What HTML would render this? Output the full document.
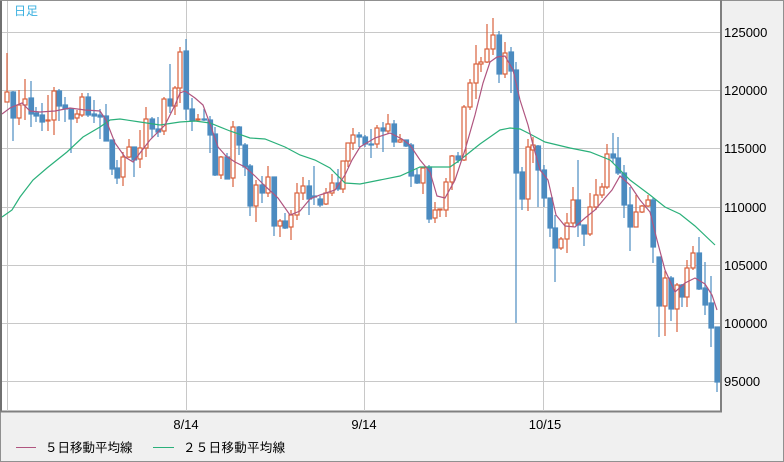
<!DOCTYPE html>
<html><head><meta charset="utf-8"><style>
html,body{margin:0;padding:0;background:#f0f0f0;}
svg{display:block;font-family:"Liberation Sans","Noto Sans CJK JP",sans-serif;}
</style></head><body>
<svg width="784" height="462" viewBox="0 0 784 462" xmlns="http://www.w3.org/2000/svg">
<rect x="0" y="0" width="784" height="462" fill="#f0f0f0"/>
<rect x="0.5" y="0.5" width="783" height="461" fill="none" stroke="#909090"/>
<rect x="2" y="1" width="718" height="410" fill="#fff"/>
<line x1="1" y1="0" x2="1" y2="412" stroke="#707070" stroke-width="2"/>
<line x1="0" y1="0.5" x2="784" y2="0.5" stroke="#909090"/>
<line x1="721" y1="0" x2="721" y2="412" stroke="#808080" stroke-width="2"/>
<line x1="0" y1="411.5" x2="722" y2="411.5" stroke="#808080" stroke-width="2"/>
<g stroke="#c8c8c8" stroke-width="1">
<line x1="2" y1="32.5" x2="720" y2="32.5"/><line x1="2" y1="90.5" x2="720" y2="90.5"/><line x1="2" y1="148.5" x2="720" y2="148.5"/><line x1="2" y1="207.5" x2="720" y2="207.5"/><line x1="2" y1="265.5" x2="720" y2="265.5"/><line x1="2" y1="323.5" x2="720" y2="323.5"/><line x1="2" y1="381.5" x2="720" y2="381.5"/>
<line x1="7.5" y1="1" x2="7.5" y2="411"/><line x1="186.5" y1="1" x2="186.5" y2="411"/><line x1="364.5" y1="1" x2="364.5" y2="411"/><line x1="543.5" y1="1" x2="543.5" y2="411"/>
</g>
<text x="14" y="15" font-size="12" fill="#3ab0e0">日足</text>
<g font-size="13" fill="#000">
<text x="724" y="37">125000</text><text x="724" y="95">120000</text><text x="724" y="153">115000</text><text x="724" y="212">110000</text><text x="724" y="270">105000</text><text x="724" y="328">100000</text><text x="724" y="386">95000</text>
<text x="186" y="429" text-anchor="middle">8/14</text><text x="364" y="429" text-anchor="middle">9/14</text><text x="545" y="429" text-anchor="middle">10/15</text>
</g>
<line x1="16" y1="447.5" x2="36" y2="447.5" stroke="#b0557f"/>
<text x="45" y="452" font-size="12.5" letter-spacing="0">５日移動平均線</text>
<line x1="153" y1="447.5" x2="174" y2="447.5" stroke="#2ab07a"/>
<text x="183" y="452" font-size="12.5" letter-spacing="0.3">２５日移動平均線</text>

<g stroke="#4b8bc0" fill="#4b8bc0" stroke-width="1.2">
<line x1="13" y1="91" x2="13" y2="141"/><rect x="11" y="92" width="4.5" height="26"/>
<line x1="31" y1="81" x2="31" y2="127"/><rect x="29" y="98" width="4.5" height="16"/>
<line x1="36" y1="107" x2="36" y2="122"/><rect x="34" y="113" width="4.5" height="3"/>
<line x1="42" y1="103" x2="42" y2="131"/><rect x="40" y="115" width="4.5" height="7"/>
<line x1="59" y1="89" x2="59" y2="121"/><rect x="57" y="91" width="4.5" height="15"/>
<line x1="65" y1="97" x2="65" y2="122"/><rect x="63" y="105" width="4.5" height="4"/>
<line x1="71" y1="108" x2="71" y2="153"/><rect x="69" y="109" width="4.5" height="10"/>
<line x1="88" y1="93" x2="88" y2="117"/><rect x="86" y="97" width="4.5" height="18"/>
<line x1="94" y1="100" x2="94" y2="123"/><rect x="92" y="114" width="4.5" height="2"/>
<line x1="100" y1="109" x2="100" y2="139"/><rect x="98" y="115" width="4.5" height="2"/>
<line x1="106" y1="104" x2="106" y2="141"/><rect x="104" y="116" width="4.5" height="25"/>
<line x1="112" y1="140" x2="112" y2="175"/><rect x="110" y="140" width="4.5" height="29"/>
<line x1="117" y1="160" x2="117" y2="184"/><rect x="115" y="168" width="4.5" height="10"/>
<line x1="134" y1="147" x2="134" y2="177"/><rect x="132" y="147" width="4.5" height="13"/>
<line x1="152" y1="117" x2="152" y2="138"/><rect x="150" y="119" width="4.5" height="10"/>
<line x1="158" y1="117" x2="158" y2="137"/><rect x="156" y="129" width="4.5" height="3"/>
<line x1="170" y1="64" x2="170" y2="113"/><rect x="168" y="99" width="4.5" height="7"/>
<line x1="186" y1="39" x2="186" y2="120"/><rect x="184" y="51" width="4.5" height="58"/>
<line x1="192" y1="98" x2="192" y2="131"/><rect x="190" y="109" width="4.5" height="12"/>
<line x1="204" y1="109" x2="204" y2="121"/><rect x="202" y="119" width="4.5" height="1"/>
<line x1="210" y1="116" x2="210" y2="153"/><rect x="208" y="120" width="4.5" height="15"/>
<line x1="215" y1="127" x2="215" y2="176"/><rect x="213" y="134" width="4.5" height="41"/>
<line x1="227" y1="153" x2="227" y2="179"/><rect x="225" y="157" width="4.5" height="22"/>
<line x1="239" y1="126" x2="239" y2="155"/><rect x="237" y="127" width="4.5" height="18"/>
<line x1="245" y1="143" x2="245" y2="176"/><rect x="243" y="145" width="4.5" height="22"/>
<line x1="250" y1="164" x2="250" y2="216"/><rect x="248" y="166" width="4.5" height="40"/>
<line x1="262" y1="176" x2="262" y2="203"/><rect x="260" y="185" width="4.5" height="8"/>
<line x1="274" y1="177" x2="274" y2="236"/><rect x="272" y="177" width="4.5" height="49"/>
<line x1="285" y1="213" x2="285" y2="229"/><rect x="283" y="221" width="4.5" height="7"/>
<line x1="309" y1="180" x2="309" y2="215"/><rect x="307" y="186" width="4.5" height="13"/>
<line x1="314" y1="166" x2="314" y2="205"/><rect x="312" y="196" width="4.5" height="1"/>
<line x1="320" y1="196" x2="320" y2="207"/><rect x="318" y="199" width="4.5" height="6"/>
<line x1="338" y1="169" x2="338" y2="191"/><rect x="336" y="183" width="4.5" height="6"/>
<line x1="359" y1="132" x2="359" y2="147"/><rect x="357" y="135" width="4.5" height="2"/>
<line x1="365" y1="135" x2="365" y2="147"/><rect x="363" y="137" width="4.5" height="7"/>
<line x1="371" y1="129" x2="371" y2="158"/><rect x="369" y="144" width="4.5" height="1"/>
<line x1="383" y1="122" x2="383" y2="152"/><rect x="381" y="128" width="4.5" height="3"/>
<line x1="394" y1="120" x2="394" y2="147"/><rect x="392" y="124" width="4.5" height="18"/>
<line x1="406" y1="140" x2="406" y2="147"/><rect x="404" y="140" width="4.5" height="6"/>
<line x1="411" y1="143" x2="411" y2="187"/><rect x="409" y="145" width="4.5" height="31"/>
<line x1="417" y1="169" x2="417" y2="184"/><rect x="415" y="175" width="4.5" height="8"/>
<line x1="429" y1="165" x2="429" y2="223"/><rect x="427" y="167" width="4.5" height="52"/>
<line x1="458" y1="152" x2="458" y2="163"/><rect x="456" y="156" width="4.5" height="4"/>
<line x1="499" y1="31" x2="499" y2="83"/><rect x="497" y="35" width="4.5" height="39"/>
<line x1="511" y1="47" x2="511" y2="93"/><rect x="509" y="52" width="4.5" height="19"/>
<line x1="516" y1="62" x2="516" y2="323"/><rect x="514" y="70" width="4.5" height="103"/>
<line x1="522" y1="167" x2="522" y2="210"/><rect x="520" y="172" width="4.5" height="27"/>
<line x1="538" y1="145" x2="538" y2="207"/><rect x="536" y="146" width="4.5" height="24"/>
<line x1="544" y1="165" x2="544" y2="207"/><rect x="542" y="170" width="4.5" height="28"/>
<line x1="550" y1="198" x2="550" y2="237"/><rect x="548" y="198" width="4.5" height="30"/>
<line x1="555" y1="215" x2="555" y2="282"/><rect x="553" y="228" width="4.5" height="20"/>
<line x1="578" y1="160" x2="578" y2="237"/><rect x="576" y="200" width="4.5" height="25"/>
<line x1="584" y1="225" x2="584" y2="246"/><rect x="582" y="225" width="4.5" height="9"/>
<line x1="613" y1="133" x2="613" y2="163"/><rect x="611" y="154" width="4.5" height="4"/>
<line x1="618" y1="137" x2="618" y2="175"/><rect x="616" y="158" width="4.5" height="15"/>
<line x1="624" y1="165" x2="624" y2="218"/><rect x="622" y="173" width="4.5" height="32"/>
<line x1="630" y1="187" x2="630" y2="251"/><rect x="628" y="205" width="4.5" height="22"/>
<line x1="653" y1="198" x2="653" y2="263"/><rect x="651" y="200" width="4.5" height="47"/>
<line x1="659" y1="257" x2="659" y2="337"/><rect x="657" y="257" width="4.5" height="49"/>
<line x1="671" y1="276" x2="671" y2="321"/><rect x="669" y="278" width="4.5" height="31"/>
<line x1="682" y1="284" x2="682" y2="307"/><rect x="680" y="285" width="4.5" height="12"/>
<line x1="699" y1="237" x2="699" y2="290"/><rect x="697" y="253" width="4.5" height="36"/>
<line x1="705" y1="262" x2="705" y2="315"/><rect x="703" y="288" width="4.5" height="17"/>
<line x1="711" y1="276" x2="711" y2="347"/><rect x="709" y="303" width="4.5" height="25"/>
<line x1="717" y1="327" x2="717" y2="392"/><rect x="715" y="327" width="4.5" height="55"/>
</g>
<g stroke="#d9613c" fill="#fff" stroke-width="1.2">
<line x1="7" y1="53" x2="7" y2="102"/><rect x="5" y="92" width="4" height="10"/>
<line x1="19" y1="90" x2="19" y2="125"/><rect x="17" y="105" width="4" height="13"/>
<line x1="25" y1="79" x2="25" y2="120"/><rect x="23" y="99" width="4" height="6"/>
<line x1="48" y1="95" x2="48" y2="131"/><rect x="46" y="120" width="4" height="1"/>
<line x1="54" y1="87" x2="54" y2="135"/><rect x="52" y="91" width="4" height="29"/>
<line x1="77" y1="110" x2="77" y2="123"/><rect x="75" y="114" width="4" height="4"/>
<line x1="82" y1="93" x2="82" y2="117"/><rect x="80" y="97" width="4" height="18"/>
<line x1="123" y1="152" x2="123" y2="186"/><rect x="121" y="157" width="4" height="20"/>
<line x1="129" y1="139" x2="129" y2="158"/><rect x="127" y="147" width="4" height="10"/>
<line x1="140" y1="130" x2="140" y2="168"/><rect x="138" y="148" width="4" height="11"/>
<line x1="146" y1="107" x2="146" y2="157"/><rect x="144" y="119" width="4" height="29"/>
<line x1="164" y1="97" x2="164" y2="135"/><rect x="162" y="99" width="4" height="32"/>
<line x1="175" y1="86" x2="175" y2="115"/><rect x="173" y="88" width="4" height="18"/>
<line x1="180" y1="47" x2="180" y2="103"/><rect x="178" y="52" width="4" height="36"/>
<line x1="198" y1="114" x2="198" y2="122"/><rect x="196" y="119" width="4" height="1"/>
<line x1="221" y1="156" x2="221" y2="179"/><rect x="219" y="157" width="4" height="18"/>
<line x1="233" y1="121" x2="233" y2="187"/><rect x="231" y="127" width="4" height="51"/>
<line x1="256" y1="180" x2="256" y2="222"/><rect x="254" y="185" width="4" height="21"/>
<line x1="268" y1="166" x2="268" y2="197"/><rect x="266" y="177" width="4" height="16"/>
<line x1="280" y1="219" x2="280" y2="237"/><rect x="278" y="221" width="4" height="5"/>
<line x1="291" y1="210" x2="291" y2="240"/><rect x="289" y="215" width="4" height="12"/>
<line x1="297" y1="183" x2="297" y2="220"/><rect x="295" y="193" width="4" height="22"/>
<line x1="303" y1="177" x2="303" y2="200"/><rect x="301" y="186" width="4" height="7"/>
<line x1="326" y1="188" x2="326" y2="205"/><rect x="324" y="193" width="4" height="11"/>
<line x1="332" y1="174" x2="332" y2="196"/><rect x="330" y="183" width="4" height="10"/>
<line x1="343" y1="161" x2="343" y2="193"/><rect x="341" y="161" width="4" height="28"/>
<line x1="348" y1="143" x2="348" y2="167"/><rect x="346" y="143" width="4" height="18"/>
<line x1="353" y1="128" x2="353" y2="150"/><rect x="351" y="135" width="4" height="8"/>
<line x1="377" y1="125" x2="377" y2="148"/><rect x="375" y="128" width="4" height="16"/>
<line x1="388" y1="114" x2="388" y2="134"/><rect x="386" y="124" width="4" height="7"/>
<line x1="400" y1="134" x2="400" y2="143"/><rect x="398" y="140" width="4" height="2"/>
<line x1="423" y1="167" x2="423" y2="194"/><rect x="421" y="168" width="4" height="15"/>
<line x1="435" y1="202" x2="435" y2="223"/><rect x="433" y="210" width="4" height="8"/>
<line x1="440" y1="209" x2="440" y2="217"/><rect x="438" y="209" width="4" height="1"/>
<line x1="446" y1="178" x2="446" y2="217"/><rect x="444" y="182" width="4" height="28"/>
<line x1="452" y1="155" x2="452" y2="190"/><rect x="450" y="156" width="4" height="26"/>
<line x1="464" y1="105" x2="464" y2="161"/><rect x="462" y="107" width="4" height="53"/>
<line x1="470" y1="79" x2="470" y2="110"/><rect x="468" y="83" width="4" height="24"/>
<line x1="476" y1="45" x2="476" y2="99"/><rect x="474" y="64" width="4" height="19"/>
<line x1="481" y1="57" x2="481" y2="72"/><rect x="479" y="62" width="4" height="2"/>
<line x1="487" y1="24" x2="487" y2="63"/><rect x="485" y="49" width="4" height="13"/>
<line x1="493" y1="18" x2="493" y2="55"/><rect x="491" y="35" width="4" height="14"/>
<line x1="505" y1="42" x2="505" y2="78"/><rect x="503" y="53" width="4" height="21"/>
<line x1="528" y1="139" x2="528" y2="211"/><rect x="526" y="147" width="4" height="52"/>
<line x1="533" y1="137" x2="533" y2="163"/><rect x="531" y="145" width="4" height="5"/>
<line x1="561" y1="237" x2="561" y2="250"/><rect x="559" y="239" width="4" height="9"/>
<line x1="567" y1="213" x2="567" y2="253"/><rect x="565" y="223" width="4" height="16"/>
<line x1="573" y1="187" x2="573" y2="227"/><rect x="571" y="200" width="4" height="23"/>
<line x1="590" y1="193" x2="590" y2="236"/><rect x="588" y="207" width="4" height="27"/>
<line x1="596" y1="179" x2="596" y2="210"/><rect x="594" y="195" width="4" height="12"/>
<line x1="602" y1="183" x2="602" y2="198"/><rect x="600" y="187" width="4" height="8"/>
<line x1="607" y1="144" x2="607" y2="189"/><rect x="605" y="154" width="4" height="33"/>
<line x1="636" y1="195" x2="636" y2="227"/><rect x="634" y="212" width="4" height="15"/>
<line x1="642" y1="205" x2="642" y2="213"/><rect x="640" y="206" width="4" height="6"/>
<line x1="648" y1="195" x2="648" y2="207"/><rect x="646" y="200" width="4" height="6"/>
<line x1="665" y1="271" x2="665" y2="336"/><rect x="663" y="278" width="4" height="28"/>
<line x1="677" y1="283" x2="677" y2="332"/><rect x="675" y="285" width="4" height="24"/>
<line x1="687" y1="260" x2="687" y2="307"/><rect x="685" y="268" width="4" height="29"/>
<line x1="693" y1="246" x2="693" y2="270"/><rect x="691" y="253" width="4" height="15"/>
</g>
<polyline fill="none" stroke="#2ab07a" stroke-width="1.2" points="2,217 12,210 20,197 33,180 47,168 67,152 83,137 100,127 110,120 120,119 140,122 160,125 180,122 195,121 210,123 230,131 250,138 265,139 285,147 300,155 315,160 330,168 345,183 360,184 380,180 400,176 420,167 450,167 460,160 470,152 480,144 490,137 500,130 510,128 520,129 530,134 545,142 570,148 590,152 610,160 630,180 650,195 665,207 680,214 695,226 715,245"/>
<polyline fill="none" stroke="#b0557f" stroke-width="1.2" points="2,114 10,108 22,103 30,111 40,112 55,111 70,108 85,110 100,111 106,120 115,143 125,157 133,162 140,153 150,140 165,125 175,105 180,93 185,91 195,98 203,105 210,124 218,147 226,156 235,162 245,167 255,176 265,186 278,198 290,215 300,211 310,199 320,195 335,190 345,175 352,160 360,147 375,138 390,133 402,139 410,145 420,160 430,172 437,196 445,198 455,180 465,150 475,115 483,83 490,62 497,57 505,56 513,70 520,100 528,125 533,145 540,170 548,180 556,215 565,226 575,227 585,218 595,210 605,198 612,190 620,176 630,185 640,200 650,212 657,240 665,270 675,292 685,283 695,278 705,284 712,295 717,310"/>
</svg>
</body></html>
